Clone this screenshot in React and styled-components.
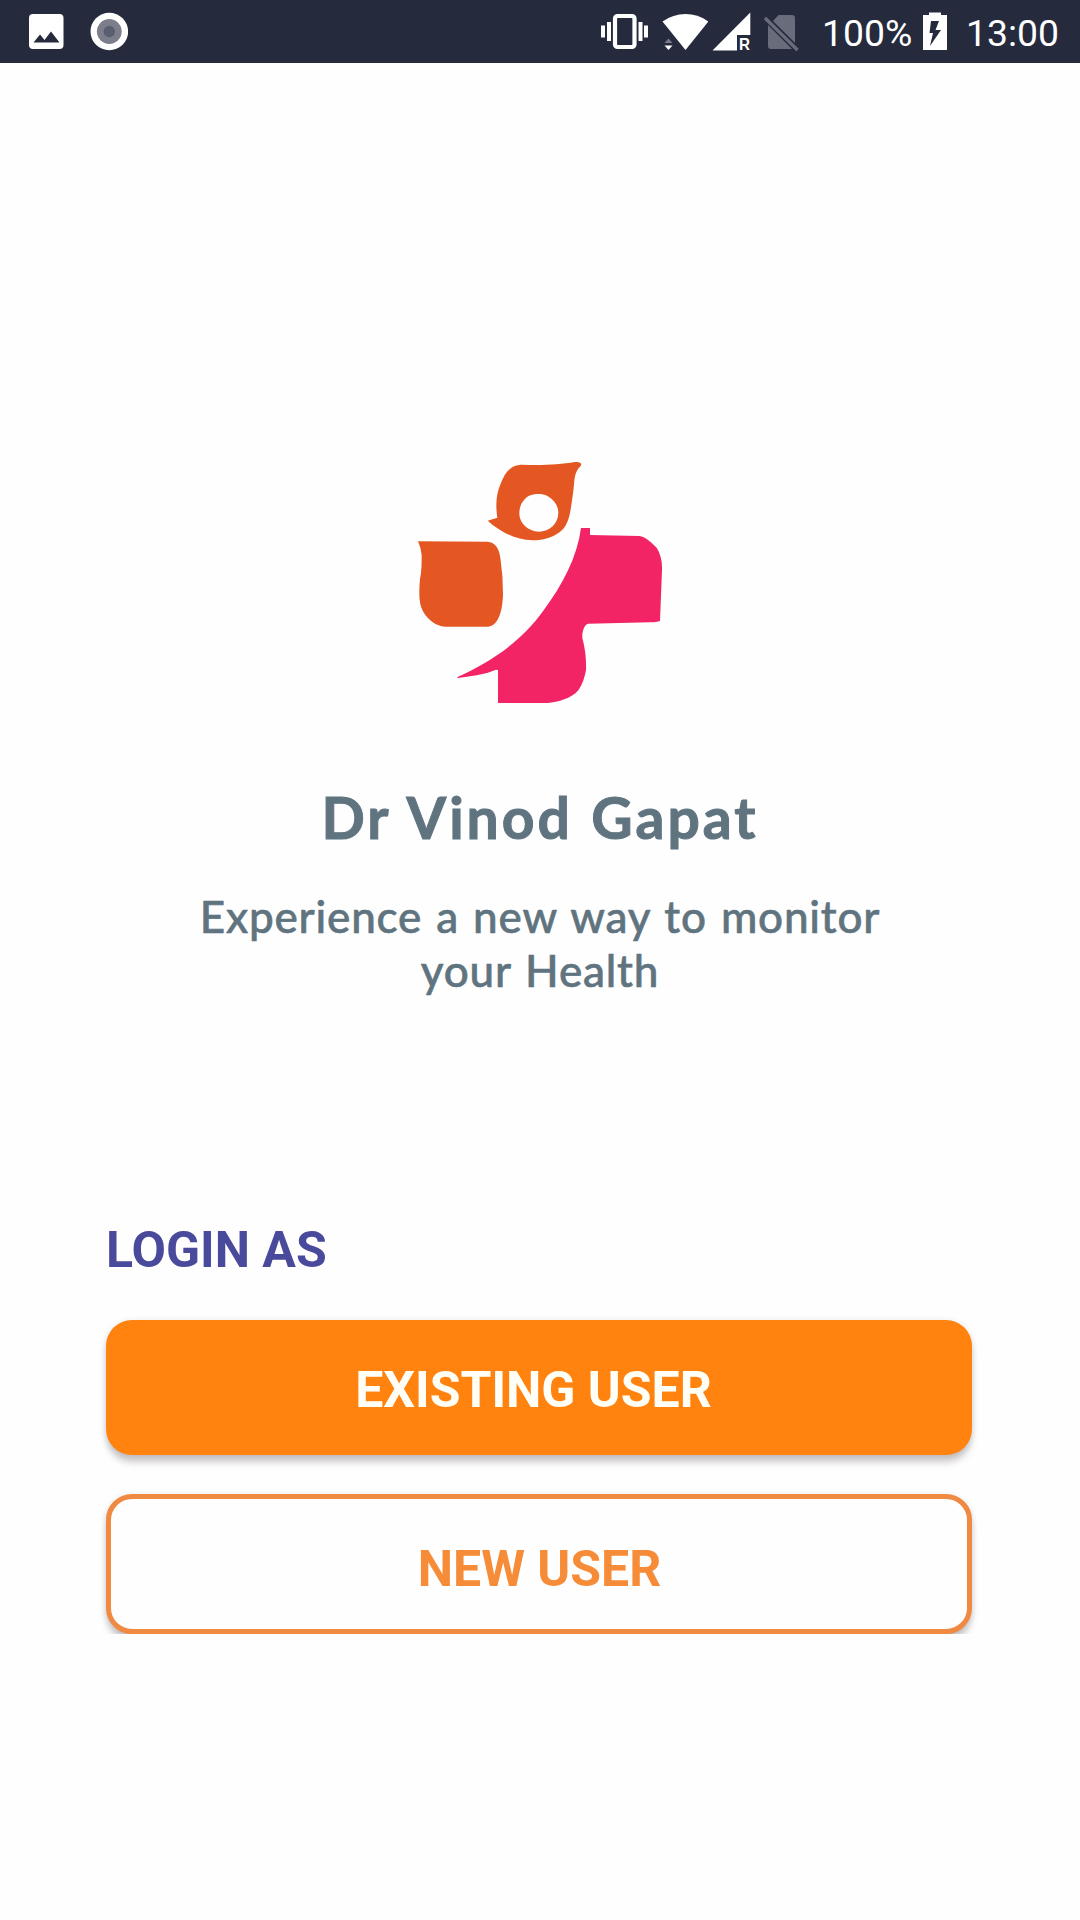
import React from "react";
import styled, { createGlobalStyle } from "styled-components";

const colors = {
  bar: "#252a3d",
  slate: "#607480",
  indigo: "#4a4a9c",
  orange: "#ff830e",
  outline: "#f08a42",
  logoOrange: "#e45622",
  logoPink: "#f22465"
};

const GlobalStyle = createGlobalStyle`
  body {
    margin: 0;
    background: #fefefe;
  }
`;

const Screen = styled.div`
  display: flex;
  flex-direction: column;
  width: 1080px;
  height: 1920px;
  overflow: hidden;
  background: #fefefe;
  font-family: Roboto, "Liberation Sans", sans-serif;
`;

const StatusBar = styled.header`
  display: flex;
  flex: none;
  align-items: center;
  justify-content: space-between;
  box-sizing: border-box;
  height: 63px;
  padding: 0 22px 0 29px;
  background: ${colors.bar};
  color: #fff;
`;

const StatusGroup = styled.div`
  display: flex;
  align-items: center;
  height: 63px;
`;

const StatusIcon = styled.svg`
  display: block;
  flex: none;
  height: 63px;
  margin-left: ${props => props.$gap || 0}px;
`;

const StatusText = styled.span`
  width: ${props => props.$width}px;
  margin-left: ${props => props.$gap}px;
  padding-top: 3px;
  font-size: 37.300px;
  line-height: 44px;
  white-space: nowrap;
`;

const Intro = styled.section`
  display: flex;
  flex-direction: column;
  align-items: center;
  height: 1157px;
  color: ${colors.slate};
  font-family: Lato, "Liberation Sans", sans-serif;
  text-align: center;
`;

const Logo = styled.svg`
  display: block;
  width: 280px;
  height: 270px;
  margin-top: 387px;
`;

const DoctorName = styled.h1`
  margin: 63px 0 0;
  font-size: 57px;
  font-weight: 700;
  line-height: 68px;
  letter-spacing: 3px;
  word-spacing: 1.5px;
  white-space: nowrap;
  -webkit-text-stroke: 1px ${colors.slate};
`;

const Tagline = styled.p`
  margin: 38px 0 0;
  font-size: 44px;
  font-weight: 500;
  line-height: 54px;
  letter-spacing: 0.8px;
  word-spacing: 2.2px;
  white-space: nowrap;
  -webkit-text-stroke: 0.6px ${colors.slate};
`;

const LoginPanel = styled.section`
  display: flex;
  flex-direction: column;
  width: 866px;
  height: 414px;
  padding: 0 106px;
  overflow: hidden;
`;

const LoginLabel = styled.h2`
  margin: 0;
  color: ${colors.indigo};
  font-size: 50px;
  font-weight: 700;
  line-height: 60px;
`;

const LoginButton = styled.button`
  flex: none;
  box-sizing: border-box;
  width: 866px;
  height: ${props => (props.$outlined ? 140 : 135)}px;
  margin: ${props => (props.$outlined ? 39 : 40)}px 0 0;
  padding: ${props => (props.$outlined ? "9px 0 0 1px" : "4px 11px 0 0")};
  border: ${props => (props.$outlined ? `5px solid ${colors.outline}` : "none")};
  border-radius: 26px;
  background: ${props => (props.$outlined ? "#fefefe" : colors.orange)};
  box-shadow: 0 8px 7px -1px rgba(70, 60, 65, 0.27), 0 1px 6px rgba(50, 45, 60, 0.12);
  color: ${props => (props.$outlined ? "#f68b38" : "#fffff8")};
  font-family: inherit;
  font-size: 50px;
  font-weight: 700;
  line-height: 60px;
  cursor: pointer;
`;

const PictureIcon = () => (
  <StatusIcon width="35" viewBox="29 0 35 63">
    <path
      fill="#fff"
      fillRule="evenodd"
      d="M33 14H59.500Q63.500 14 63.500 18V45Q63.500 49 59.500 49H33Q29 49 29 45V18Q29 14 33 14ZM33.500 42.500H59.500L51 31.500L44.500 40L40 34.500Z"
    />
  </StatusIcon>
);

const RecordIcon = () => (
  <StatusIcon width="38" viewBox="90 0 38 63" $gap={26}>
    <circle cx="109.300" cy="31.500" r="18.800" fill="#fff" />
    <circle cx="109.300" cy="31.500" r="12.400" fill="#7c7f8b" />
    <circle cx="109.300" cy="31.500" r="5.700" fill="#5a5f70" />
  </StatusIcon>
);

const VibrateIcon = () => (
  <StatusIcon width="48" viewBox="601 0 48 63">
    <rect x="615" y="16" width="19.500" height="31" rx="2.500" fill="none" stroke="#fff" strokeWidth="4.200" />
    <path fill="#fff" d="M601 25.500h4v12h-4zM607 22h4v19h-4zM638.500 22h4v19h-4zM644 25.500h4v12h-4z" />
  </StatusIcon>
);

const WifiIcon = () => (
  <StatusIcon width="46" viewBox="662 0 46 63" $gap={13}>
    <path fill="#fff" d="M662.500 21.500Q673 14 685.500 14T708.500 21.500L685.500 50Z" />
    <path fill="#777b88" d="M664.500 43L668.500 38.500L672.500 43Z" />
    <path fill="#fff" d="M664.500 45.500H672.500L668.500 50Z" />
  </StatusIcon>
);

const SignalIcon = () => (
  <StatusIcon width="39" viewBox="712 0 39 63" $gap={4}>
    <path fill="#fff" d="M750.300 12.500V35H737V50.500H712.500Z" />
    <text x="739" y="50" fill="#fff" fontFamily="Liberation Sans, sans-serif" fontWeight="700" fontSize="17" textLength="11" lengthAdjust="spacingAndGlyphs">
      R
    </text>
  </StatusIcon>
);

const NoSimIcon = () => (
  <StatusIcon width="36" viewBox="763 0 36 63" $gap={12}>
    <path fill="#696d7b" d="M778.500 15H792Q795 15 795 18V43L773 21ZM768 25L792 49H771Q768 49 768 46Z" />
    <path stroke="#696d7b" strokeWidth="3.200" d="M765 18L797.500 50" />
  </StatusIcon>
);

const BatteryIcon = () => (
  <StatusIcon width="25" viewBox="923 0 25 63" $gap={13}>
    <path
      fill="#fff"
      fillRule="evenodd"
      d="M929 12.500H941V15H947V50H923V15H929ZM931 21L929.500 33H933L930 46L941 30H935.500L939 21Z"
    />
  </StatusIcon>
);

// Coordinates are three times the drawn size
const ClinicLogo = () => (
  <Logo viewBox="0 0 840 810" role="img" aria-label="Dr Vinod Gapat">
    <g fill={colors.logoOrange}>
      <path
        fillRule="evenodd"
        d="M368 44C420 47 480 44 525 36C541 34 548 42 541 49C519 72 525 93 519 130C514 163 512 196 499 223C487 249 446 272 397 271C347 269 303 247 263 212L292 203C286 163 289 130 302 101C317 63 334 44 368 44ZM417 132C397 132 383 137 373 149C364 157 358 173 358 190C358 220 385 245 417 245C449 245 475 220 475 189C475 172 468 160 459 151C446 138 434 132 417 132Z"
      />
      <path d="M54 274L262 275C285 276 297 294 301 323Q309 376 309 432C308 473 300 507 282 523Q276 529 265 530H136C105 530 70 500 61 463C56 439 58 410 60 386C65 367 65 337 65 316Q64 296 54 274Z" />
    </g>
    <path
      fill={colors.logoPink}
      d="M543 234H570V255L718 258C737 260 759 282 770 293C782 313 787 333 786 360L780 513Q770 517 750 517L565 521C552 524 546 546 547 563C556 598 559 627 558 660C554 681 548 703 535 721C514 746 474 756 443 759H294V660L288 659Q261 671 230 676L175 684L171 682C275 635 365 574 431 481C488 404 532 320 543 234Z"
    />
  </Logo>
);

const App = () => {
  return (
    <>
      <GlobalStyle />
      <Screen>
        <StatusBar>
          <StatusGroup>
            <PictureIcon />
            <RecordIcon />
          </StatusGroup>
          <StatusGroup>
            <VibrateIcon />
            <WifiIcon />
            <SignalIcon />
            <NoSimIcon />
            <StatusText $width={88} $gap={23}>
              100%
            </StatusText>
            <BatteryIcon />
            <StatusText $width={92} $gap={18}>
              13:00
            </StatusText>
          </StatusGroup>
        </StatusBar>
        <Intro>
          <ClinicLogo />
          <DoctorName>Dr Vinod Gapat</DoctorName>
          <Tagline>
            Experience a new way to monitor
            <br />
            your Health
          </Tagline>
        </Intro>
        <LoginPanel>
          <LoginLabel>LOGIN AS</LoginLabel>
          <LoginButton type="button">EXISTING USER</LoginButton>
          <LoginButton type="button" $outlined>
            NEW USER
          </LoginButton>
        </LoginPanel>
      </Screen>
    </>
  );
};

export default App;
